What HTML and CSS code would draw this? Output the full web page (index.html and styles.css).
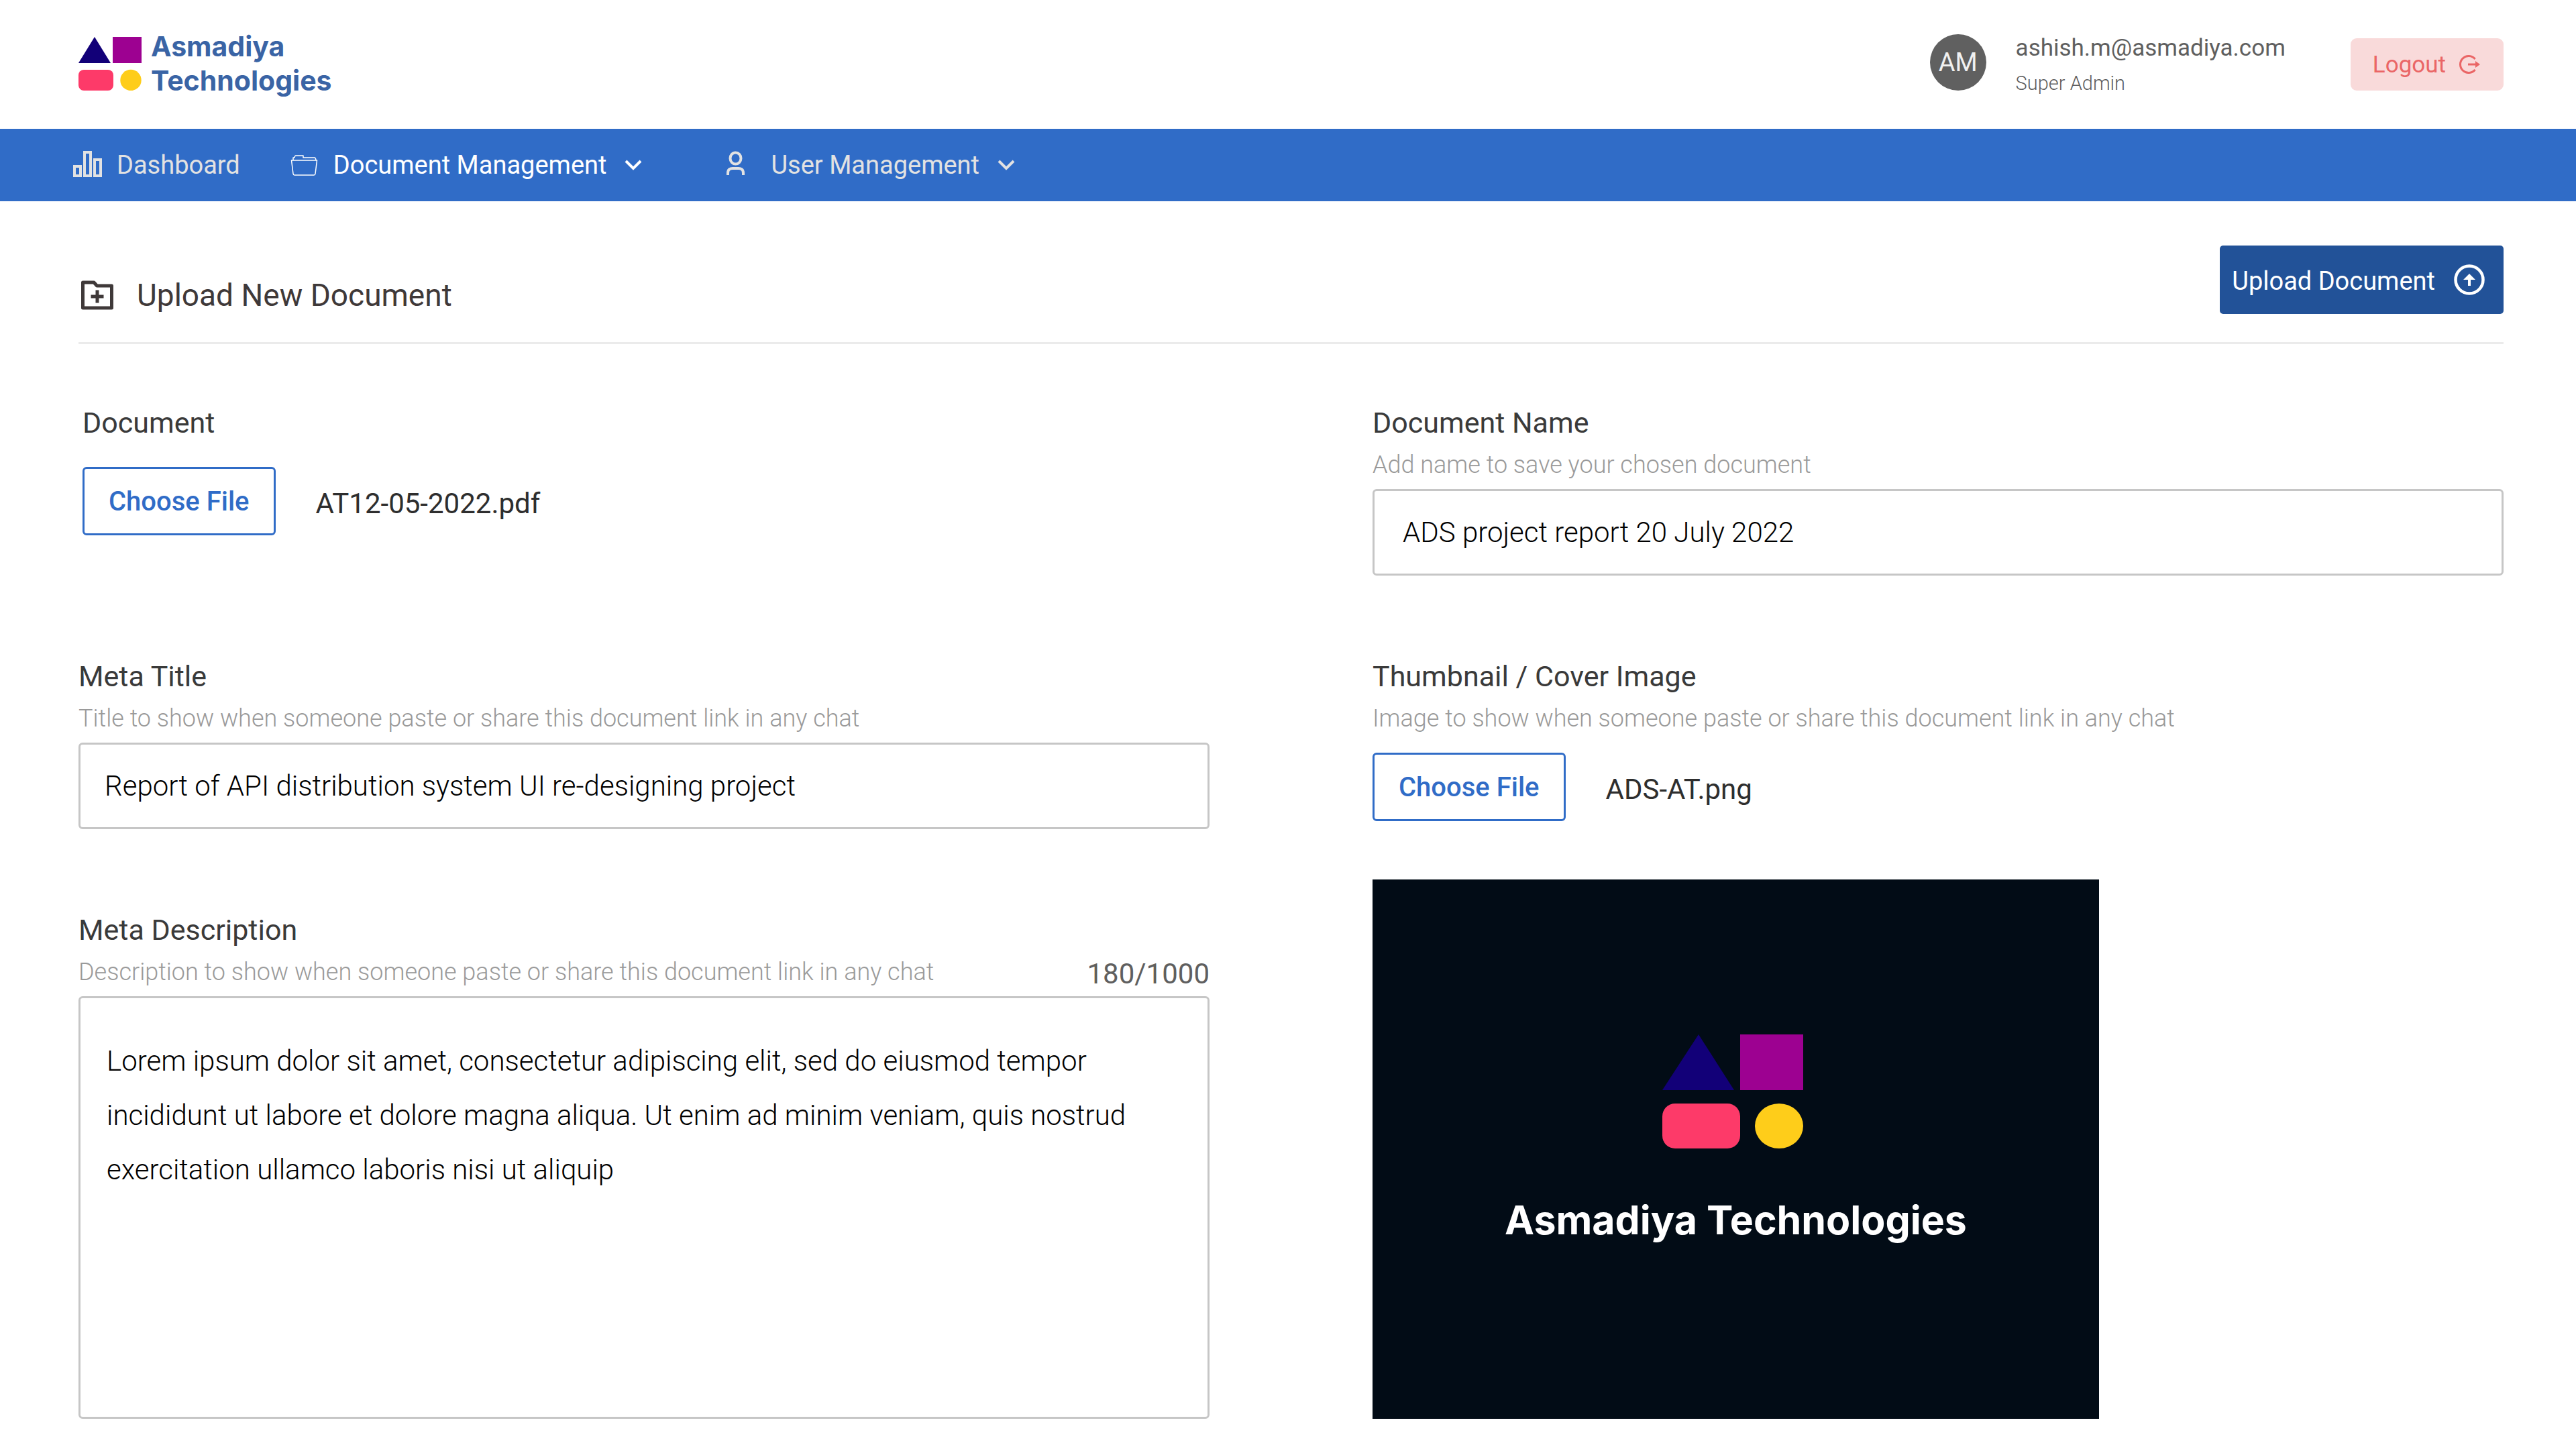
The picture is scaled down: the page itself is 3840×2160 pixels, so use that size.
FILE: index.html
```html
<!DOCTYPE html>
<html lang="en">
<head>
<meta charset="utf-8">
<meta name="viewport" content="width=device-width, initial-scale=1">
<title>Upload New Document</title>
<link rel="stylesheet" href="styles.css">
</head>
<body>
<header class="topbar">
  <a class="brand" href="#">
    <svg class="brand-mark" viewBox="0 0 94 80" aria-hidden="true">
      <path d="M24 0L48 39H0z" fill="#120078"/>
      <path d="M51 0h43v39H51z" fill="#9d0191"/>
      <rect x="0" y="49" width="52" height="31" rx="8" fill="#fd3a69"/>
      <circle cx="78" cy="64.500" r="15.700" fill="#fecd1a"/>
    </svg>
    <span class="brand-name">Asmadiya<br>Technologies</span>
  </a>
  <div class="account">
    <span class="avatar">AM</span>
    <div class="account-text">
      <span class="email">ashish.m@asmadiya.com</span>
      <span class="role">Super Admin</span>
    </div>
    <button class="logout" type="button">Logout
      <svg class="logout-icon" viewBox="0 0 32 28" aria-hidden="true">
        <path d="M23.600 6A12.500 12.500 0 1 0 23.600 22" fill="none" stroke="currentColor" stroke-width="3"/>
        <path d="M13 14h12" stroke="currentColor" stroke-width="3"/>
        <path d="M24 9l7 5-7 5z" fill="currentColor"/>
      </svg>
    </button>
  </div>
</header>

<nav class="mainnav">
  <a class="nav-item" href="#">
    <svg class="nav-icon" viewBox="0 0 48 48" fill="none" stroke="currentColor" stroke-width="4" aria-hidden="true">
      <path d="M6 26h9v14H6zM21 5h9v35h-9zM36 16h9v24h-9z"/>
    </svg>
    <span>Dashboard</span>
  </a>
  <a class="nav-item nav-menu is-active" href="#">
    <svg class="nav-icon" viewBox="0 0 48 48" fill="none" stroke="currentColor" stroke-width="1.500" stroke-linejoin="round" aria-hidden="true">
      <path d="M6.500 17h38l-2.500 20q-.3 2-2 2H11q-1.700 0-2-2zM9 17v-4h2q.5-3 2-3h11v3h17q1.500 0 2 4"/>
    </svg>
    <span>Document Management</span>
    <svg class="chevron" viewBox="0 0 26 18" fill="none" stroke="currentColor" stroke-width="4" aria-hidden="true"><path d="M2 3l11 11L24 3"/></svg>
  </a>
  <a class="nav-item nav-menu" href="#">
    <svg class="nav-icon" viewBox="0 0 48 48" fill="none" stroke="currentColor" stroke-width="4" aria-hidden="true">
      <ellipse cx="16.500" cy="14" rx="8" ry="8.500"/>
      <path d="M5 39v-3q0-7 7-7h9q7 0 7 7v3"/>
    </svg>
    <span>User Management</span>
    <svg class="chevron" viewBox="0 0 26 18" fill="none" stroke="currentColor" stroke-width="4" aria-hidden="true"><path d="M2 3l11 11L24 3"/></svg>
  </a>
</nav>

<main class="page">
  <div class="page-head">
    <h1 class="page-title">
      <svg class="title-icon" viewBox="0 0 48 44" fill="none" stroke="currentColor" stroke-width="5" stroke-linejoin="round" aria-hidden="true">
        <path d="M2.500 3H19l4.500 5h22v33h-43z"/>
        <path d="M24 14.500v19M14.500 24h19"/>
      </svg>
      Upload New Document
    </h1>
    <button class="upload" type="submit" form="upload-form">
      <span class="upload-text">Upload Document</span>
      <svg class="upload-icon" viewBox="0 0 46 46" aria-hidden="true">
        <circle cx="23" cy="23" r="20.500" fill="none" stroke="currentColor" stroke-width="4.500"/>
        <path d="M23 14l9 9h-7v9h-4v-9h-7z" fill="currentColor"/>
      </svg>
    </button>
  </div>

  <form class="form" id="upload-form">
    <div class="field field-document">
      <label class="label" for="choose-document">Document</label>
      <div class="file-row">
        <button class="choose" type="button" id="choose-document">Choose File</button>
        <span class="file-name">AT12-05-2022.pdf</span>
      </div>
    </div>

    <div class="field">
      <label class="label" for="document-name">Document Name</label>
      <p class="hint">Add name to save your chosen document</p>
      <input class="input input-name" id="document-name" type="text" value="ADS project report 20 July 2022">
    </div>

    <div class="field">
      <label class="label" for="meta-title">Meta Title</label>
      <p class="hint">Title to show when someone paste or share this document link in any chat</p>
      <input class="input" id="meta-title" type="text" value="Report of API distribution system UI re-designing project">
    </div>

    <div class="field field-cover">
      <label class="label" for="choose-cover">Thumbnail / Cover Image</label>
      <p class="hint">Image to show when someone paste or share this document link in any chat</p>
      <div class="file-row">
        <button class="choose" type="button" id="choose-cover">Choose File</button>
        <span class="file-name">ADS-AT.png</span>
      </div>
      <div class="cover">
        <svg class="cover-mark" viewBox="0 0 220 170" aria-hidden="true">
          <path d="M54 0l53 83H0z" fill="#120078"/>
          <path d="M116 0h94v83h-94z" fill="#9d0191"/>
          <rect x="0" y="103" width="116" height="67" rx="19" fill="#fd3a69"/>
          <ellipse cx="174" cy="136.500" rx="36" ry="33.500" fill="#fecd1a"/>
        </svg>
        <span class="cover-name">Asmadiya Technologies</span>
      </div>
    </div>

    <div class="field">
      <label class="label" for="meta-description">Meta Description</label>
      <div class="hint-row">
        <p class="hint">Description to show when someone paste or share this document link in any chat</p>
        <span class="counter">180/1000</span>
      </div>
      <textarea class="input textarea" id="meta-description">Lorem ipsum dolor sit amet, consectetur adipiscing elit, sed do eiusmod tempor incididunt ut labore et dolore magna aliqua. Ut enim ad minim veniam, quis nostrud exercitation ullamco laboris nisi ut aliquip</textarea>
    </div>
  </form>
</main>
</body>
</html>
```
FILE: styles.css
```css
* {
  box-sizing: border-box;
}

body {
  margin: 0;
  background: #fff;
  color: #3a3a3a;
  font-family: Roboto, "Liberation Sans", sans-serif;
  font-size: 38px;
}

button,
input,
textarea {
  font-family: inherit;
}

a {
  color: inherit;
  text-decoration: none;
}

svg {
  display: block;
  flex: none;
}

/* Top bar */
.topbar {
  display: flex;
  align-items: center;
  justify-content: space-between;
  min-height: 192px;
  padding: 0 108px 0 117px;
}

.brand {
  display: flex;
  align-items: center;
  gap: 14px;
  padding-bottom: 2px;
  color: #3a64a5;
}

.brand-mark {
  width: 94px;
  height: 80px;
}

.brand-name {
  font-family: Inter, sans-serif;
  font-size: 41px;
  font-weight: 700;
  line-height: 51px;
}

.account {
  display: flex;
  align-items: center;
}

.avatar {
  display: flex;
  align-items: center;
  justify-content: center;
  width: 84px;
  height: 84px;
  margin-bottom: 6px;
  border-radius: 50%;
  background: #606060;
  color: #f0f0f0;
  font-size: 38px;
}

.account-text {
  display: flex;
  flex-direction: column;
  margin: 4px 97px 0 44px;
  line-height: 52px;
  color: #5f5f5f;
}

.email {
  font-size: 35px;
}

.role {
  font-size: 29px;
  font-weight: 300;
}

.logout {
  display: flex;
  align-items: center;
  gap: 20px;
  height: 78px;
  padding: 0 34px 0 33px;
  border: 0;
  border-radius: 9px;
  background: #f9dada;
  color: #ea6666;
  font-size: 35px;
}

.logout-icon {
  width: 32px;
  height: 28px;
}

/* Navigation */
.mainnav {
  display: flex;
  align-items: center;
  gap: 70px;
  min-height: 108px;
  padding: 0 105px;
  background: #306cc7;
  color: #e2e2e2;
}

.nav-item {
  display: flex;
  align-items: center;
  gap: 21px;
  line-height: 48px;
}

.nav-menu {
  padding-right: 53px;
}

.is-active {
  color: #fff;
}

.nav-icon {
  width: 48px;
  height: 48px;
}

.chevron {
  width: 26px;
  height: 18px;
  margin-left: 6px;
}

/* Page */
.page {
  padding: 66px 108px 44px 117px;
}

.page-head {
  display: flex;
  align-items: flex-end;
  justify-content: space-between;
  padding-bottom: 42px;
  border-bottom: 3px solid #ebebeb;
}

.page-title {
  display: flex;
  align-items: center;
  gap: 35px;
  margin: 0;
  padding-left: 4px;
  color: #3f3939;
  font-size: 46px;
  font-weight: 400;
  line-height: 56px;
}

.title-icon {
  width: 48px;
  height: 44px;
}

.upload {
  display: flex;
  align-items: center;
  gap: 28px;
  height: 102px;
  padding: 0 28px 0 18px;
  border: 0;
  border-radius: 5px;
  background: #225298;
  color: #fff;
  font-size: 38px;
}

.upload-text {
  padding-top: 3px;
}

.upload-icon {
  width: 46px;
  height: 46px;
}

/* Form */
.form {
  display: grid;
  grid-template-columns: 1fr 1fr;
  gap: 120px 243px;
  margin-top: 87px;
}

.field {
  display: flex;
  flex-direction: column;
  min-width: 0;
}

.field-document {
  gap: 36px;
  padding-left: 6px;
}

.field-cover {
  grid-row: 2 / span 2;
  grid-column: 2;
}

.field-cover .file-row {
  margin-top: 18px;
}

.label {
  color: #3a3a3a;
  font-size: 43px;
  line-height: 60px;
}

.hint {
  margin: 0;
  color: #9a9a9a;
  font-size: 36px;
  font-weight: 300;
  line-height: 66px;
}

.hint-row {
  display: flex;
  align-items: flex-end;
  justify-content: space-between;
}

.counter {
  color: #5f5f5f;
  font-size: 42px;
  line-height: 60px;
}

.input {
  width: 100%;
  height: 129px;
  margin: 3px 0 0;
  padding: 0 36px;
  border: 3px solid #c6c6c6;
  border-radius: 6px;
  background: #fff;
  color: #000;
  font-size: 42px;
  font-weight: 300;
}

.input-name {
  padding: 0 42px;
}

.textarea {
  display: block;
  height: 630px;
  padding: 53px 39px;
  line-height: 81px;
  resize: none;
}

.file-row {
  display: flex;
  align-items: center;
  gap: 60px;
}

.choose {
  height: 102px;
  padding: 0 36px;
  border: 3px solid #306cc7;
  border-radius: 6px;
  background: #fff;
  color: #306cc7;
  font-size: 40px;
  font-weight: 500;
}

.file-name {
  padding-top: 6px;
  color: #2e2e2e;
  font-size: 42px;
}

.cover {
  display: flex;
  flex-direction: column;
  align-items: center;
  gap: 65px;
  width: 1083px;
  max-width: 100%;
  height: 804px;
  margin-top: 87px;
  padding-top: 231px;
  background: #020c16;
}

.cover-mark {
  width: 220px;
  height: 170px;
}

.cover-name {
  color: #fff;
  font-family: Inter, sans-serif;
  font-size: 59px;
  font-weight: 700;
  line-height: 84px;
}
```
